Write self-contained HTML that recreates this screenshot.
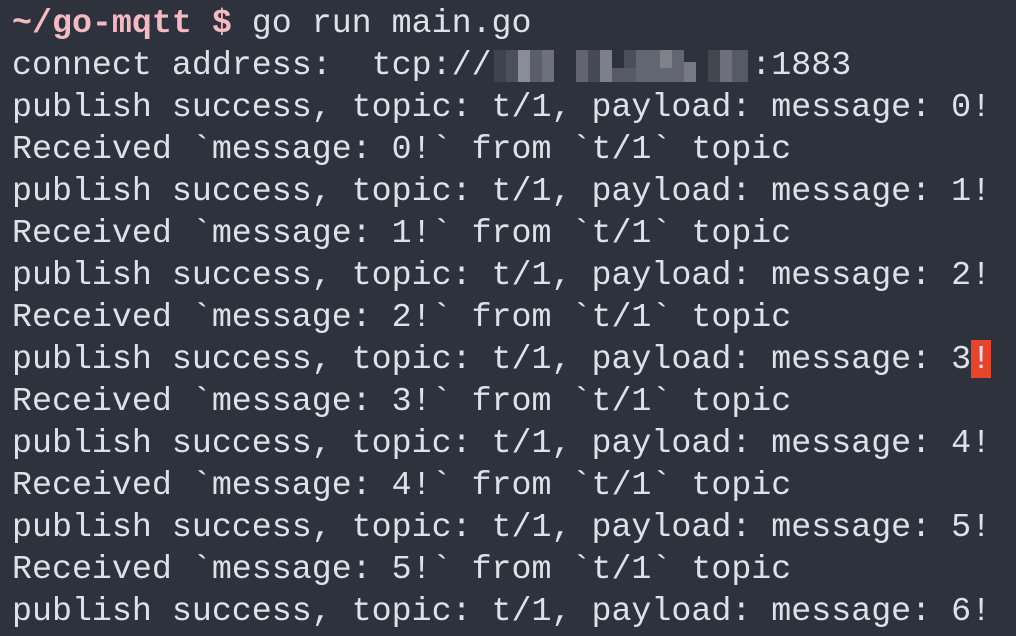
<!DOCTYPE html>
<html><head><meta charset="utf-8"><style>
html,body{margin:0;padding:0;width:1016px;height:636px;overflow:hidden;background:#2e323d;}
.t{position:absolute;left:12px;top:2px;font-family:"Liberation Mono","DejaVu Sans Mono",monospace;font-size:33.3px;line-height:42px;color:#dde1e8;white-space:pre;}
.p{color:#f5b9c1;font-weight:bold;}
.cur{background:#e8442a;color:#dde1e8;}
.b{position:absolute;}
</style></head><body>
<div class="t"><span class="p">~/go-mqtt $</span> go run main.go
connect address:  tcp://             :1883
publish success, topic: t/1, payload: message: 0!
Received `message: 0!` from `t/1` topic
publish success, topic: t/1, payload: message: 1!
Received `message: 1!` from `t/1` topic
publish success, topic: t/1, payload: message: 2!
Received `message: 2!` from `t/1` topic
publish success, topic: t/1, payload: message: 3<span class="cur">!</span>
Received `message: 3!` from `t/1` topic
publish success, topic: t/1, payload: message: 4!
Received `message: 4!` from `t/1` topic
publish success, topic: t/1, payload: message: 5!
Received `message: 5!` from `t/1` topic
publish success, topic: t/1, payload: message: 6!</div>
<div class="b" style="left:494px;top:50px;width:12px;height:32px;background:#3f4350"></div>
<div class="b" style="left:506px;top:50px;width:12px;height:32px;background:#4c505c"></div>
<div class="b" style="left:518px;top:50px;width:12px;height:32px;background:#8a8d96"></div>
<div class="b" style="left:530px;top:50px;width:12px;height:32px;background:#5a5e69"></div>
<div class="b" style="left:542px;top:50px;width:12px;height:32px;background:#6e717b"></div>
<div class="b" style="left:576px;top:50px;width:12px;height:32px;background:#62656f"></div>
<div class="b" style="left:588px;top:50px;width:12px;height:32px;background:#454955"></div>
<div class="b" style="left:600px;top:50px;width:12px;height:32px;background:#7d808a"></div>
<div class="b" style="left:612px;top:68px;width:36px;height:14px;background:#565a65"></div>
<div class="b" style="left:624px;top:50px;width:12px;height:18px;background:#4a4e5a"></div>
<div class="b" style="left:636px;top:50px;width:48px;height:32px;background:#626670"></div>
<div class="b" style="left:660px;top:50px;width:12px;height:18px;background:#7f828b"></div>
<div class="b" style="left:684px;top:62px;width:12px;height:20px;background:#777a84"></div>
<div class="b" style="left:708px;top:50px;width:12px;height:32px;background:#43474f"></div>
<div class="b" style="left:720px;top:50px;width:12px;height:32px;background:#6d707a"></div>
<div class="b" style="left:732px;top:50px;width:16px;height:32px;background:#565a65"></div>
</body></html>
